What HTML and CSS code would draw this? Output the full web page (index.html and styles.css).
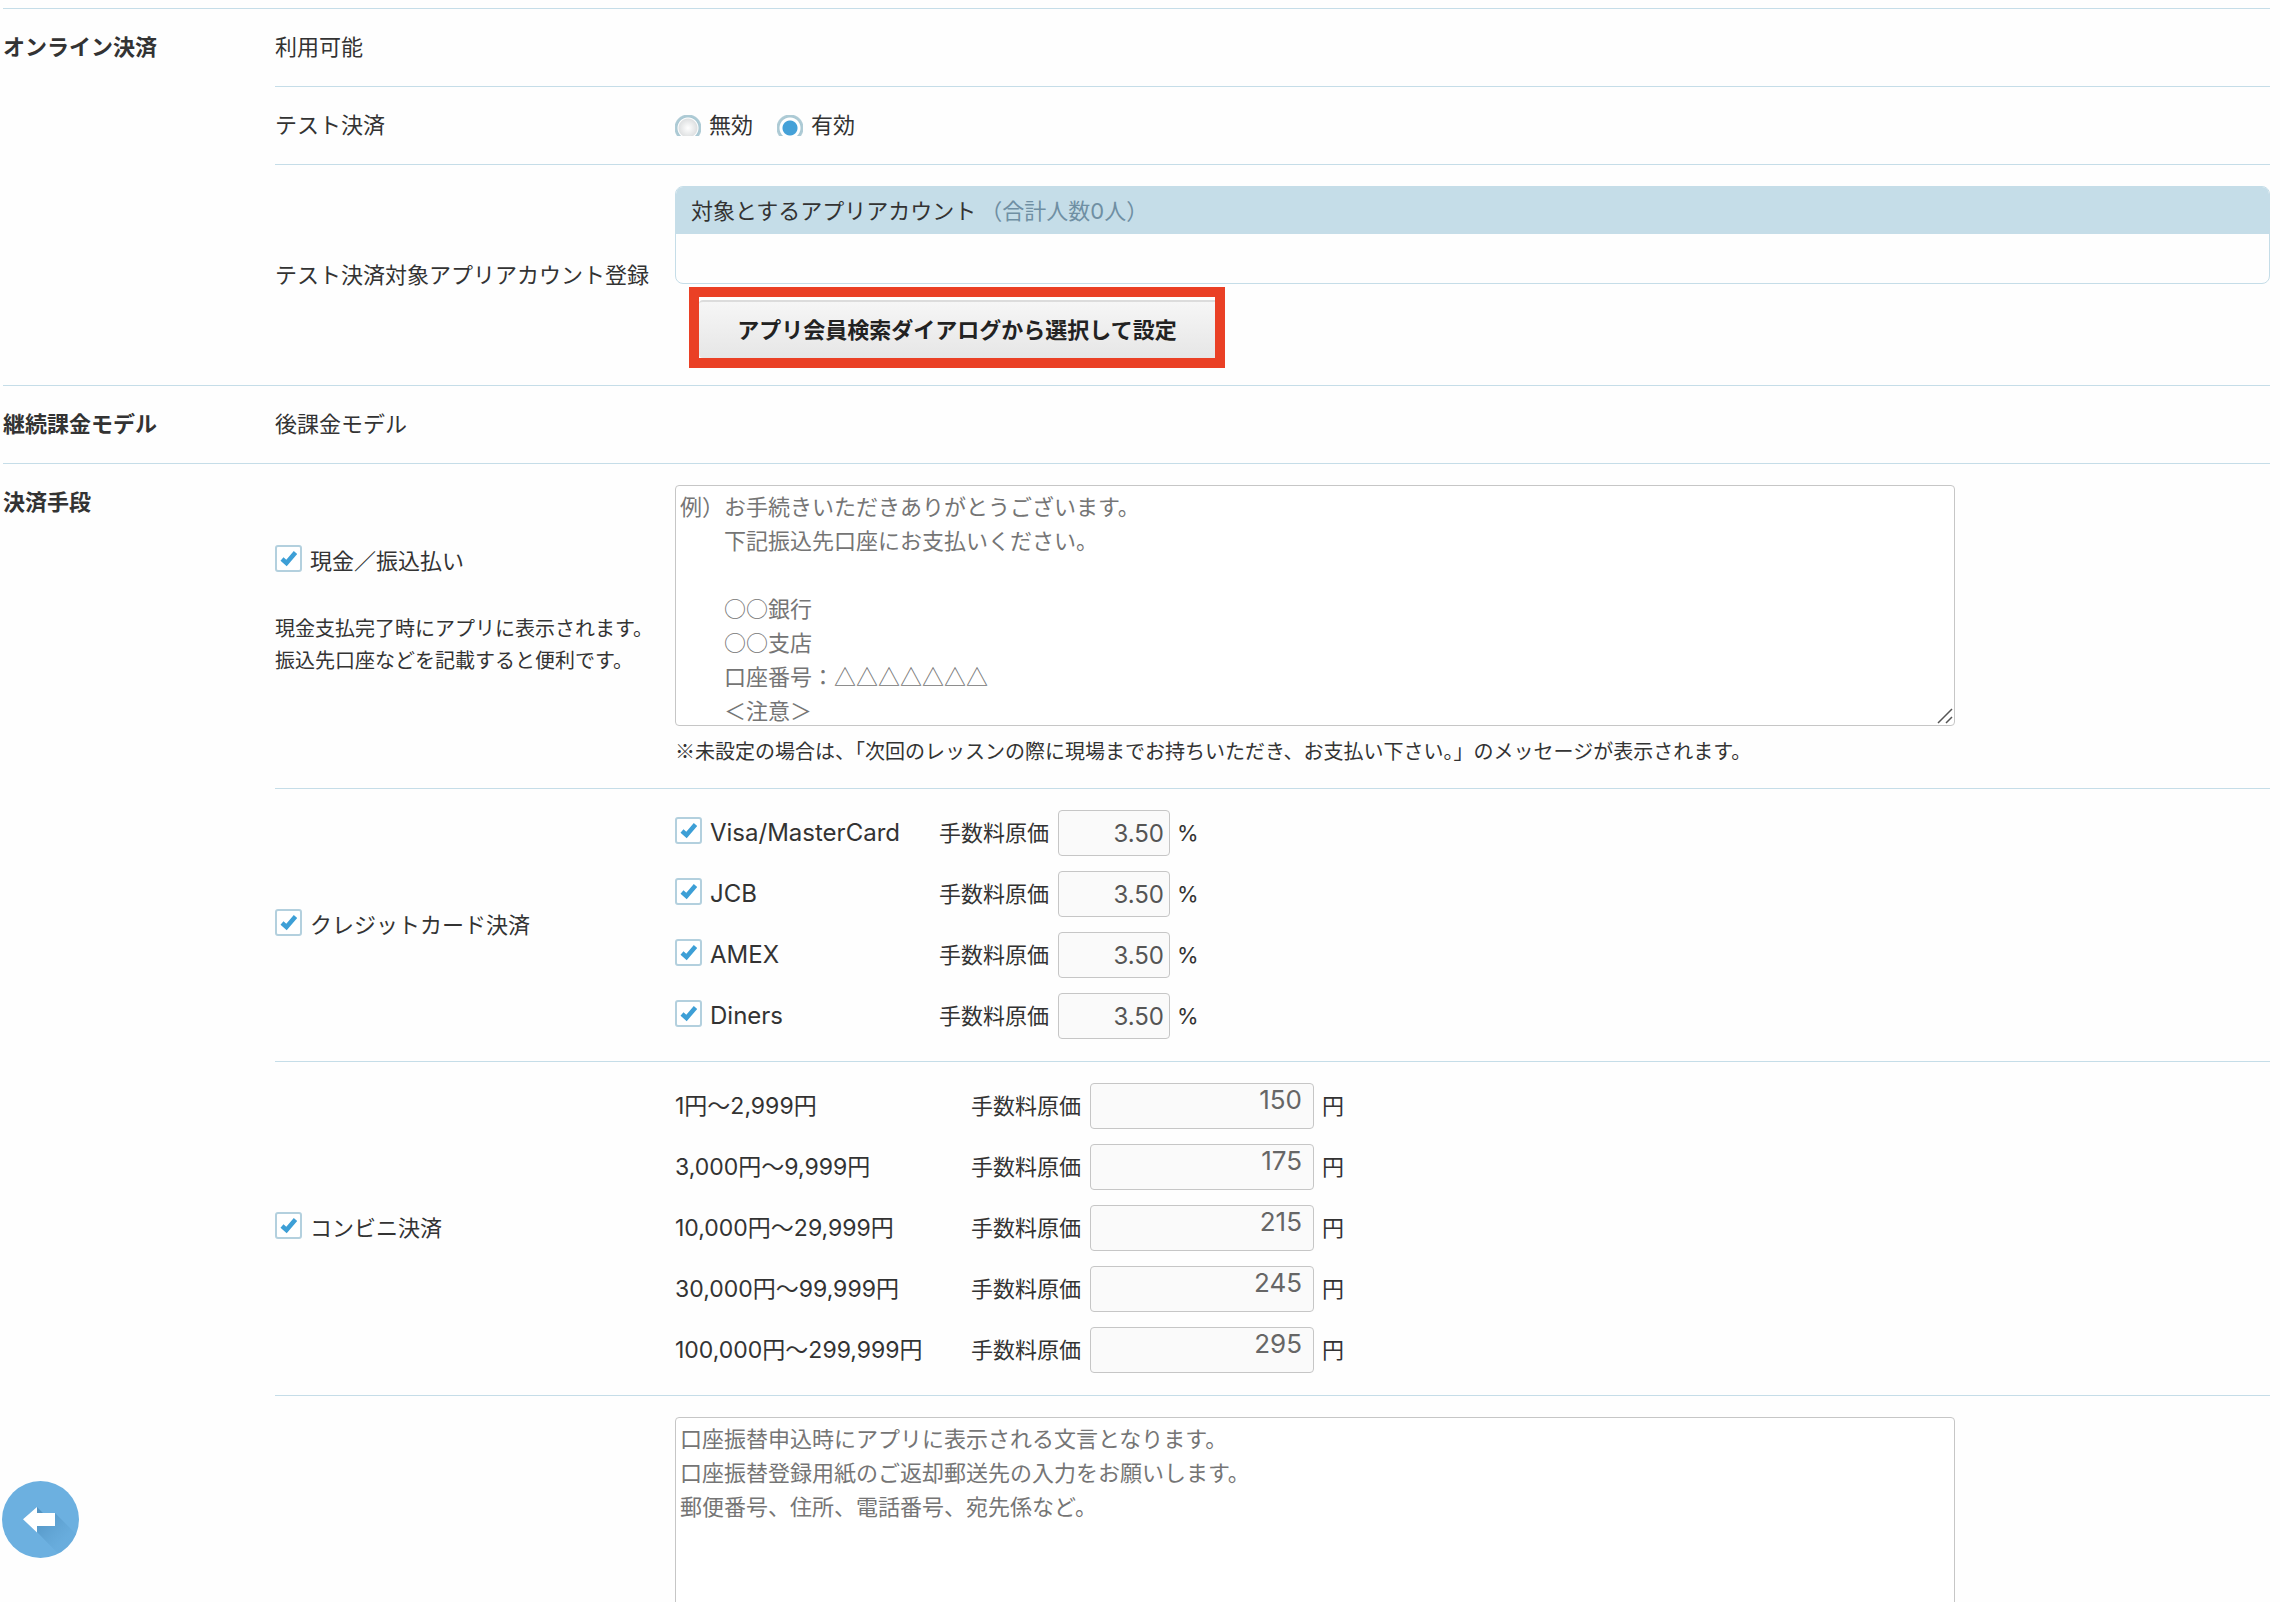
FILE: index.html
```html
<!DOCTYPE html>
<html lang="ja">
<head>
<meta charset="utf-8">
<title>決済設定</title>
<link rel="stylesheet" href="styles.css">
</head>
<body>
<form class="page">
  <section class="section">
    <h2 class="section-title">オンライン決済</h2>
    <div class="rows">
      <div class="row"><span class="name">利用可能</span></div>
      <div class="row">
        <span class="name">テスト決済</span>
        <div class="field radios">
          <label class="choice"><input class="radio" type="radio" name="test">無効</label>
          <label class="choice"><input class="radio" type="radio" name="test" checked>有効</label>
        </div>
      </div>
      <div class="row row-accounts">
        <span class="name">テスト決済対象アプリアカウント登録</span>
        <div class="field">
          <div class="panel">
            <div class="panel-head">対象とするアプリアカウント<span class="count">（合計人数0人）</span></div>
            <div class="panel-body"></div>
          </div>
          <div class="highlight"><button class="search" type="button">アプリ会員検索ダイアログから選択して設定</button></div>
        </div>
      </div>
    </div>
  </section>

  <section class="section">
    <h2 class="section-title">継続課金モデル</h2>
    <div class="rows">
      <div class="row"><span class="name">後課金モデル</span></div>
    </div>
  </section>

  <section class="section">
    <h2 class="section-title">決済手段</h2>
    <div class="rows">
      <div class="row">
        <div class="name name-cash">
          <label class="choice"><input class="check" type="checkbox" checked>現金／振込払い</label>
          <p class="hint">現金支払完了時にアプリに表示されます。<br>振込先口座などを記載すると便利です。</p>
        </div>
        <div class="field">
          <div class="memo">
            <textarea class="textarea" aria-label="現金／振込払いのメッセージ" placeholder="例）お手続きいただきありがとうございます。
　　下記振込先口座にお支払いください。

　　○○銀行
　　○○支店
　　口座番号：△△△△△△△
　　＜注意＞"></textarea>
            <svg class="grip" viewBox="0 0 16 16" aria-hidden="true"><path d="M1 15 15 1M9 15l6-6"/></svg>
          </div>
          <p class="note">※未設定の場合は、「次回のレッスンの際に現場までお持ちいただき、お支払い下さい。」のメッセージが表示されます。</p>
        </div>
      </div>

      <div class="row">
        <div class="name"><label class="choice"><input class="check" type="checkbox" checked>クレジットカード決済</label></div>
        <div class="field fees">
          <div class="fee fee-card">
            <label class="choice brand"><input class="check" type="checkbox" checked>Visa/MasterCard</label>
            <label for="visa">手数料原価</label><input class="amount" id="visa" value="3.50" readonly><span>%</span>
          </div>
          <div class="fee fee-card">
            <label class="choice brand"><input class="check" type="checkbox" checked>JCB</label>
            <label for="jcb">手数料原価</label><input class="amount" id="jcb" value="3.50" readonly><span>%</span>
          </div>
          <div class="fee fee-card">
            <label class="choice brand"><input class="check" type="checkbox" checked>AMEX</label>
            <label for="amex">手数料原価</label><input class="amount" id="amex" value="3.50" readonly><span>%</span>
          </div>
          <div class="fee fee-card">
            <label class="choice brand"><input class="check" type="checkbox" checked>Diners</label>
            <label for="diners">手数料原価</label><input class="amount" id="diners" value="3.50" readonly><span>%</span>
          </div>
        </div>
      </div>

      <div class="row">
        <div class="name"><label class="choice"><input class="check" type="checkbox" checked>コンビニ決済</label></div>
        <div class="field fees">
          <div class="fee fee-store">
            <span class="range">1円〜2,999円</span>
            <label for="store1">手数料原価</label><input class="amount amount-store" id="store1" value="150" readonly><span>円</span>
          </div>
          <div class="fee fee-store">
            <span class="range">3,000円〜9,999円</span>
            <label for="store2">手数料原価</label><input class="amount amount-store" id="store2" value="175" readonly><span>円</span>
          </div>
          <div class="fee fee-store">
            <span class="range">10,000円〜29,999円</span>
            <label for="store3">手数料原価</label><input class="amount amount-store" id="store3" value="215" readonly><span>円</span>
          </div>
          <div class="fee fee-store">
            <span class="range">30,000円〜99,999円</span>
            <label for="store4">手数料原価</label><input class="amount amount-store" id="store4" value="245" readonly><span>円</span>
          </div>
          <div class="fee fee-store">
            <span class="range">100,000円〜299,999円</span>
            <label for="store5">手数料原価</label><input class="amount amount-store" id="store5" value="295" readonly><span>円</span>
          </div>
        </div>
      </div>

      <div class="row">
        <div class="name"></div>
        <div class="field">
          <div class="memo">
            <textarea class="textarea" aria-label="口座振替のメッセージ" placeholder="口座振替申込時にアプリに表示される文言となります。
口座振替登録用紙のご返却郵送先の入力をお願いします。
郵便番号、住所、電話番号、宛先係など。"></textarea>
          </div>
        </div>
      </div>
    </div>
  </section>
</form>

<button class="back" type="button" aria-label="戻る">
  <svg class="back-icon" viewBox="0 0 77 77" aria-hidden="true">
    <defs>
      <linearGradient id="shade" gradientUnits="userSpaceOnUse" x1="38" y1="32" x2="64" y2="58">
        <stop offset="0" stop-color="#4a8ab8" stop-opacity=".75"/>
        <stop offset="1" stop-color="#5a9fd0" stop-opacity=".2"/>
      </linearGradient>
      <clipPath id="disc"><circle cx="38.500" cy="38.500" r="38.500"/></clipPath>
    </defs>
    <circle cx="38.500" cy="38.500" r="38.500" fill="#6cb0e0"/>
    <path clip-path="url(#disc)" fill="url(#shade)" d="M35 26l6 6h12l34 34v34H83L35 51z"/>
    <path fill="#fff" d="M21 38.300 35 26v6h18v13H35v6.500z"/>
  </svg>
</button>
</body>
</html>
```
FILE: styles.css
```css
*, *::before, *::after { box-sizing: border-box; }

body {
  margin: 0;
  background: #fefefe;
  color: #333;
  font: 22px/34px Inter, "Noto Sans CJK JP", sans-serif;
}

h2, p { margin: 0; }

input, textarea, button { margin: 0; font: inherit; color: inherit; }

.page {
  height: 100vh;
  overflow: hidden;
  padding: 8px 10px 0 3px;
}

.section {
  display: grid;
  grid-template-columns: 272px 1fr;
  border-top: 1px solid #c5dde8;
}

.section-title {
  padding-top: 21px;
  font-size: 22px;
  font-weight: 700;
}

.row {
  display: grid;
  grid-template-columns: 400px 1fr;
  align-items: center;
  padding: 21px 0 22px;
}

.row + .row { border-top: 1px solid #c5dde8; }
.row-accounts { padding-bottom: 17px; }
.row-accounts .name { padding-bottom: 5px; }

.name { white-space: nowrap; }
.name-cash { padding-bottom: 30px; }
.name-cash .hint { margin-top: 35px; }
.hint { font-size: 20px; line-height: 32px; }

.choice {
  display: flex;
  align-items: center;
  gap: 8px;
}

.radios { display: flex; gap: 24px; }

.radio {
  appearance: none;
  flex: none;
  width: 26px;
  height: 21px;
  background: radial-gradient(circle at 13px 13px, #fff 0, #dfe1e2 9px, #fff 10px, #a9c8d3 11px, #b0ccd6 13px, transparent 14px);
}

.radio:checked {
  background: radial-gradient(circle at 13px 13px, #45a1d8 0, #45a1d8 7px, #fff 8px, #fff 10px, #a9c8d3 11px, #b0ccd6 13px, transparent 14px);
}

.check {
  appearance: none;
  flex: none;
  width: 27px;
  height: 27px;
  margin-bottom: 5px;
  border: 2px solid #b3d0de;
  border-radius: 3px;
  background: #fff url("data:image/svg+xml,%3Csvg xmlns='http://www.w3.org/2000/svg' viewBox='0 0 23 23'%3E%3Cpath d='M5 12l4.500 4L18.500 5.500' fill='none' stroke='%233d9fd6' stroke-width='4.500'/%3E%3C/svg%3E") center / 23px 23px no-repeat;
}

.panel {
  overflow: hidden;
  border: 1px solid #c5dde8;
  border-radius: 8px;
}

.panel-head {
  padding: 7px 15px 6px;
  background: #c5dde8;
}

.count { margin-left: 4px; color: #6f8fa3; }
.panel-body { height: 49px; }

.highlight {
  width: fit-content;
  margin: 3px 0 0 14px;
  padding-top: 3px;
  border: 10px solid #ea4025;
  background: #fff;
}

.search {
  display: block;
  width: 516px;
  height: 58px;
  padding: 0;
  border: 0;
  border-top: 2px solid #dcdcdc;
  border-radius: 4px 0 0 4px;
  background: linear-gradient(#f6f6f6, #e6e6e6);
  color: #222;
  font-weight: 700;
}

.memo {
  position: relative;
  width: 1280px;
  max-width: 100%;
}

.textarea {
  display: block;
  width: 100%;
  height: 241px;
  padding: 2px 4px;
  border: 1px solid #c6c6c6;
  border-radius: 4px;
  background: #fff;
  font-family: "Noto Sans CJK JP", sans-serif;
  overflow: hidden;
  resize: none;
}

.textarea::placeholder { color: #757575; }

.grip {
  position: absolute;
  right: 2px;
  bottom: 2px;
  width: 16px;
  height: 16px;
  fill: none;
  stroke: #555;
  stroke-width: 1.500;
}

.note {
  margin-top: 10px;
  font: 20px/30px "Noto Sans CJK JP", sans-serif;
}

.fees { display: grid; gap: 15px; }
.fee { display: grid; align-items: center; }
.fee-card { grid-template-columns: 264px 119px 119px auto; }
.fee-store { grid-template-columns: 296px 119px 232px auto; }

.brand { font-size: 24px; }
.range { font-size: 23px; }

.amount {
  width: 112px;
  height: 46px;
  padding: 0 5px;
  border: 1px solid #c6c6c6;
  border-radius: 4px;
  background: #fafafa;
  color: #555;
  font-size: 24px;
  text-align: right;
}

.amount-store {
  width: 224px;
  padding: 0 11px 14px;
  color: #666;
  font-size: 26px;
}

.back {
  position: fixed;
  left: 2px;
  bottom: 44px;
  padding: 0;
  border: 0;
  border-radius: 50%;
  background: none;
}

.back-icon { display: block; width: 77px; height: 77px; }
```
